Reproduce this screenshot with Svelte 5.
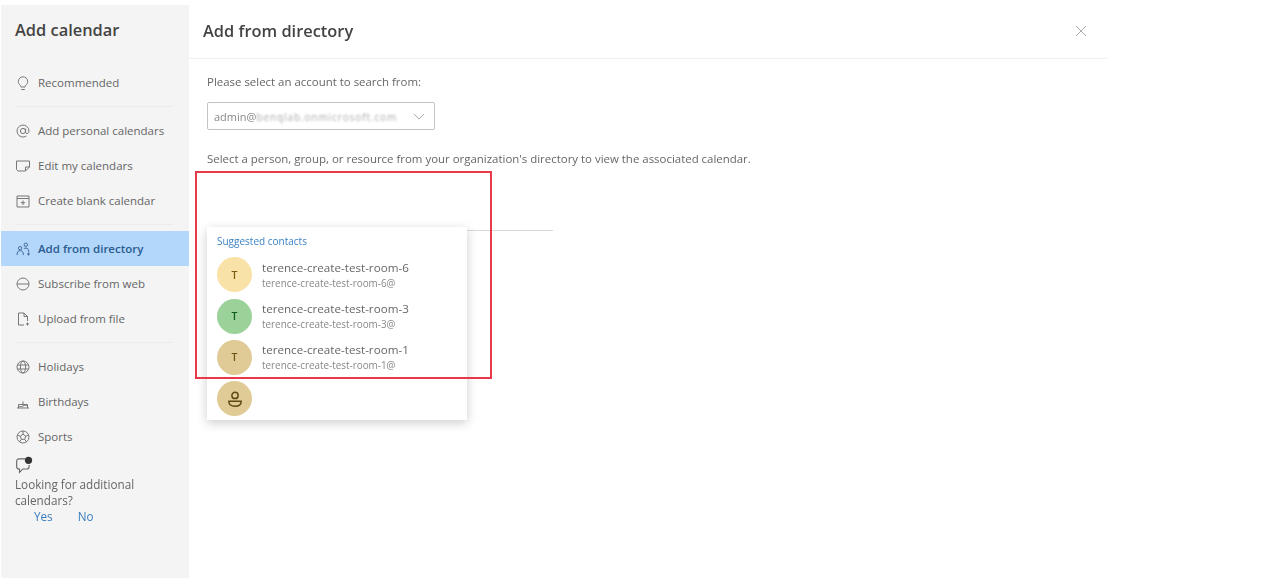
<script>
  const topItems = [{ id: 'recommended', label: 'Recommended' }];
  const addItems = [
    { id: 'personal', label: 'Add personal calendars' },
    { id: 'edit', label: 'Edit my calendars' },
    { id: 'blank', label: 'Create blank calendar' }
  ];
  const sourceItems = [
    { id: 'directory', label: 'Add from directory', active: true },
    { id: 'web', label: 'Subscribe from web' },
    { id: 'file', label: 'Upload from file' }
  ];
  const extraItems = [
    { id: 'holidays', label: 'Holidays' },
    { id: 'birthdays', label: 'Birthdays' },
    { id: 'sports', label: 'Sports' }
  ];
  const groups = [topItems, addItems, sourceItems, extraItems];

  const contacts = [
    { name: 'terence-create-test-room-6', mail: 'terence-create-test-room-6@', bg: '#f9e2a7', fg: '#7a5c12' },
    { name: 'terence-create-test-room-3', mail: 'terence-create-test-room-3@', bg: '#9ad29a', fg: '#0f5c1e' },
    { name: 'terence-create-test-room-1', mail: 'terence-create-test-room-1@', bg: '#e0cb96', fg: '#6b5414' }
  ];
</script>

{#snippet icon(id)}
  <svg class="icon" viewBox="0 0 16 16" fill="none" stroke="currentColor" stroke-width="1">
    {#if id === 'recommended'}
      <path d="M5.2 10.2C4 9.2 3.300 8 3.300 6.500a4.700 4.700 0 0 1 9.400 0c0 1.500-.7 2.700-1.900 3.700-.5.400-.8 1-.8 1.800H6c0-.8-.3-1.400-.8-1.800zM6.200 14.500h3.600" />
    {:else if id === 'personal'}
      <circle cx="8" cy="8" r="2.600" />
      <path d="M10.600 5.600v3.600c0 2 3.400 2 3.400-1.200a6 6 0 1 0-2.600 5" />
    {:else if id === 'edit'}
      <path d="M1.500 3h13v6l-4 4H3l-1.500-1.500zM10.500 13V9h4" />
    {:else if id === 'blank'}
      <path d="M2 3h12v11H2zM2 5.500h12M8 7.500v4.500M5.800 9.700h4.400" />
    {:else if id === 'directory'}
      <circle cx="5.200" cy="7.200" r="1.700" />
      <circle cx="10.800" cy="3.800" r="1.700" />
      <path d="M2 14c0-3 1.200-4.400 3.200-4.400S8.400 11 8.400 14M9 7.500c1-.6 3.200-.6 4 .5.500.7.700 1.500.800 3M12 13h3M13.500 11.500v3" />
    {:else if id === 'web'}
      <circle cx="8" cy="8" r="6" />
      <path d="M2 8h12" />
    {:else if id === 'file'}
      <path d="M9 14H3.500V2H9l3.500 3.500V10M9 2v3.500h3.500M12.500 11.500v3M11 13h3" />
    {:else if id === 'holidays'}
      <circle cx="8" cy="8" r="6" />
      <ellipse cx="8" cy="8" rx="2.600" ry="6" />
      <path d="M2.400 6h11.200M2.400 10h11.200" />
    {:else if id === 'birthdays'}
      <path d="M2 14h12M3.500 14v-3.500h9V14M3.500 12c1.500 1 3 1 4.500 0s3-1 4.500 0M8 10.500V7.500" />
    {:else}
      <circle cx="8" cy="8" r="6" />
      <path d="M8 5.200l2.700 2-1 3.100H6.300l-1-3.100zM8 5.200V2M10.700 7.200l3-1M9.700 10.300l1.800 2.700M6.300 10.300l-1.800 2.700M5.300 7.200l-3-1" />
    {/if}
  </svg>
{/snippet}

<div class="page">
  <aside class="sidebar">
    <h2>Add calendar</h2>
    <nav>
      {#each groups as group, i}
        {#if i > 0}<div class="rule"></div>{/if}
        {#each group as item}
          <div class="nav-item" class:active={item.active}>
            {@render icon(item.id)}
            <span>{item.label}</span>
          </div>
        {/each}
      {/each}
    </nav>
    <div class="feedback">
      <svg class="feedback-icon" viewBox="0 0 16 16" fill="none" stroke="currentColor">
        <path d="M9 2.500H3.500A2 2 0 0 0 1.500 4.500v5a2 2 0 0 0 2 2H4v3l3-3h3.500a2 2 0 0 0 2-2V8" />
        <circle cx="12" cy="3.800" r="3.200" fill="#333" stroke="none" />
      </svg>
      <p>Looking for additional calendars?</p>
      <div class="answers">
        <span>Yes</span>
        <span>No</span>
      </div>
    </div>
  </aside>

  <main class="panel">
    <header>
      <h1>Add from directory</h1>
      <svg class="close" viewBox="0 0 12 12" stroke="currentColor" stroke-width="1">
        <path d="M1 1l10 10M11 1L1 11" />
      </svg>
    </header>

    <div class="body">
      <p class="label">Please select an account to search from:</p>
      <div class="select">
        <span class="account">admin@<span class="smudge">benqlab.onmicrosoft.com</span></span>
        <svg class="chevron" viewBox="0 0 14 8" fill="none" stroke="currentColor">
          <path d="M1 1l6 6 6-6" />
        </svg>
      </div>
      <p class="hint">Select a person, group, or resource from your organization's directory to view the associated calendar.</p>

      <div class="search">
        <div class="search-line"></div>
        <div class="menu">
          <div class="menu-title">Suggested contacts</div>
          {#each contacts as c}
            <div class="contact">
              <div class="avatar" style="background: {c.bg}; color: {c.fg}">T</div>
              <div class="who">
                <div class="name">{c.name}</div>
                <div class="mail">{c.mail}</div>
              </div>
            </div>
          {/each}
          <div class="contact">
            <div class="avatar generic">
              <svg viewBox="0 0 16 16" fill="none" stroke="currentColor" stroke-width="1.300">
                <circle cx="8" cy="4.800" r="2.800" />
                <path d="M2.500 10h11c0 3-2 4.500-5.500 4.500S2.500 13 2.500 10z" />
              </svg>
            </div>
          </div>
        </div>
        <div class="callout"></div>
      </div>
    </div>
  </main>
</div>

<style>
  :global(body) {
    margin: 0;
    background: #fff;
  }

  .page {
    display: flex;
    align-items: stretch;
    height: 578px;
    width: 1107px;
    overflow: hidden;
    font-family: "Open Sans", "Noto Sans", "Liberation Sans", sans-serif;
    color: #555;
    filter: blur(0.5px);
  }

  .sidebar {
    box-sizing: border-box;
    width: 188px;
    margin: 5px 0 0 1px;
    background: #f4f4f4;
    flex-shrink: 0;
  }

  h2 {
    margin: 0;
    padding: 13px 0 0 14px;
    height: 48px;
    box-sizing: border-box;
    font-size: 16.4px;
    line-height: 24px;
    font-weight: 600;
    color: #444;
  }

  nav {
    padding-top: 12px;
  }

  .nav-item {
    display: flex;
    align-items: center;
    height: 35px;
    padding-left: 14px;
    font-size: 11.5px;
    color: #666;
  }

  .nav-item.active {
    background: #b3d6fb;
    color: #2b5c8f;
    font-weight: 600;
  }

  .icon {
    width: 16px;
    height: 16px;
    margin-right: 7px;
    flex-shrink: 0;
    color: #777;
  }

  .active .icon {
    color: #3f6c9b;
  }

  .rule {
    height: 1px;
    margin: 6px 16px 6px 14px;
    background: #ececec;
  }

  .feedback {
    padding: 2px 0 0 14px;
    font-size: 11.7px;
    line-height: 16px;
    color: #666;
  }

  .feedback-icon {
    display: block;
    width: 18px;
    height: 18px;
    color: #666;
  }

  .feedback p {
    margin: 2px 0 0;
    width: 130px;
  }

  .answers {
    display: flex;
    gap: 25px;
    padding-left: 19px;
    color: #3b7cbd;
  }

  .panel {
    flex: 1;
    min-width: 0;
  }

  header {
    display: flex;
    align-items: center;
    justify-content: space-between;
    box-sizing: border-box;
    height: 59px;
    padding: 3px 20px 0 14px;
    border-bottom: 1px solid #f0f0f0;
  }

  h1 {
    margin: 0;
    font-size: 16.4px;
    font-weight: 600;
    color: #444;
  }

  .close {
    width: 12px;
    height: 12px;
    color: #aaa;
  }

  .body {
    padding: 14px 0 0 18px;
    font-size: 11.45px;
    color: #666;
  }

  p {
    margin: 0;
  }

  .label {
    line-height: 18px;
  }

  .select {
    display: flex;
    align-items: center;
    justify-content: space-between;
    box-sizing: border-box;
    width: 228px;
    height: 28px;
    margin-top: 11px;
    padding: 0 6px;
    border: 1px solid #c4c4c4;
    border-radius: 2px;
    color: #888;
  }

  .account {
    white-space: nowrap;
    font-size: 11px;
  }

  .smudge {
    font-size: 10px;
    letter-spacing: 0.9px;
    color: #aaa;
    filter: blur(1px);
  }

  .chevron {
    width: 12px;
    height: 7px;
    margin-right: 3px;
    color: #999;
  }

  .hint {
    margin-top: 20px;
    line-height: 18px;
  }

  .search {
    position: relative;
    height: 63px;
    width: 346px;
  }

  .search-line {
    position: absolute;
    left: 0;
    right: 0;
    bottom: 0;
    height: 1px;
    background: #d8d8d8;
  }

  .menu {
    position: absolute;
    left: 0;
    top: 59px;
    box-sizing: border-box;
    width: 260px;
    height: 193px;
    padding: 7px 10px 0;
    overflow: hidden;
    background: #fff;
    box-shadow: 0 3px 10px rgba(0, 0, 0, 0.2);
  }

  .menu-title {
    height: 20px;
    font-size: 10px;
    line-height: 14px;
    color: #3b83c6;
  }

  .contact {
    display: flex;
    align-items: center;
    gap: 10px;
    height: 41.4px;
  }

  .avatar {
    display: flex;
    align-items: center;
    justify-content: center;
    width: 35px;
    height: 35px;
    border-radius: 50%;
    flex-shrink: 0;
    font-size: 10.5px;
    font-weight: 600;
  }

  .avatar.generic {
    background: #e0cb96;
    color: #5c4710;
  }

  .avatar.generic svg {
    width: 18px;
    height: 18px;
  }

  .name {
    font-size: 11.65px;
    line-height: 16px;
    color: #666;
  }

  .mail {
    font-size: 9.9px;
    line-height: 14px;
    color: #888;
  }

  .callout {
    position: absolute;
    left: -12px;
    top: 3px;
    box-sizing: border-box;
    width: 297px;
    height: 208px;
    border: 2px solid #e8384a;
    pointer-events: none;
  }
</style>
